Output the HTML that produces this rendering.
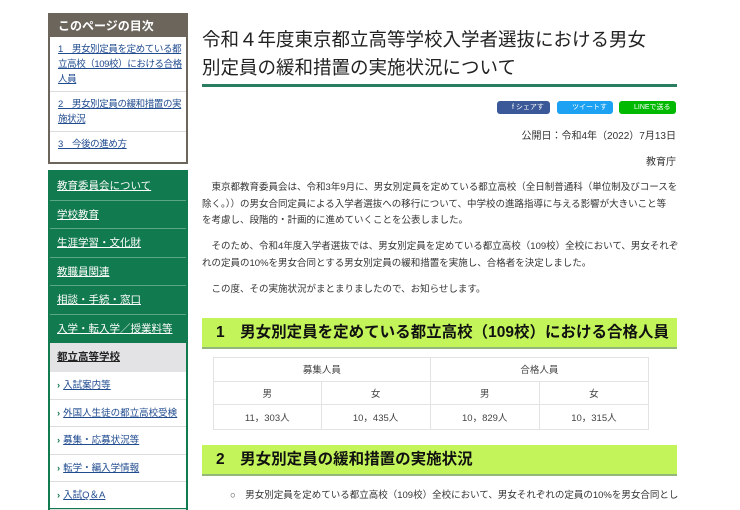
<!DOCTYPE html>
<html><head><meta charset="utf-8"><style>
*{margin:0;padding:0;box-sizing:border-box}
body{width:740px;height:498px;overflow:hidden;background:#fff;font-family:"Liberation Sans","Noto Sans CJK JP",sans-serif;color:#333;position:relative}
.a{position:absolute;white-space:nowrap}
.toc{position:absolute;left:48px;top:13px;width:140px;height:151px;border:2px solid #6b655c;background:#fff}
.toc .h{background:#6b655c;color:#fff;font-weight:bold;font-size:12px;height:22px;line-height:22px;padding-left:8px}
.toc .i{font-size:9.5px;line-height:15px;color:#1f4b8f;text-decoration:underline;padding:5px 4px 4px 8px;border-bottom:1px solid #ddd;white-space:nowrap;letter-spacing:-0.4px}
.nav{position:absolute;left:48px;top:170px;width:140px;height:340px;background:#fff;border:2px solid #127a4f}
.g{background:#127a4f;color:#fff;font-size:10.5px;text-decoration:underline;height:28.5px;line-height:28px;padding-left:7px;border-bottom:1px solid #5aa784;margin:0}
.gh{background:#e3e3e6;height:29px;line-height:29px;font-size:10.5px;font-weight:bold;text-decoration:underline;padding-left:7px;color:#222}
.w{height:27.5px;line-height:27px;font-size:9.5px;color:#1f4b8f;border-bottom:1px solid #ddd;padding-left:7px}
.w span{text-decoration:underline}
.w b{color:#127a4f;margin-right:3px}
p.t{position:absolute;left:202px;width:490px;font-size:9.5px;line-height:16.5px;color:#333;white-space:nowrap}
.hd{position:absolute;left:202px;width:475px;height:31px;background:#c3f55a;border-bottom:2px solid #93b77a;font-size:15.5px;font-weight:bold;line-height:30px;padding-left:14px;color:#111;white-space:nowrap}
table{position:absolute;left:213px;top:357px;width:436px;border-collapse:collapse;font-size:9.5px;color:#444}
td{border:1.5px solid #e3e3e3;text-align:center;height:23.5px}
.btn{position:absolute;top:101px;height:13px;border-radius:3px;color:#fff;font-size:7px;line-height:13px;padding-left:15px}
</style></head><body>
<div class="toc"><div class="h">このページの目次</div>
<div class="i">1　男女別定員を定めている都<br>立高校（109校）における合格<br>人員</div>
<div class="i">2　男女別定員の緩和措置の実<br>施状況</div>
<div class="i" style="border:none">3　今後の進め方</div></div>
<div class="nav">
<div class="g">教育委員会について</div><div class="g">学校教育</div><div class="g">生涯学習・文化財</div><div class="g">教職員関連</div><div class="g">相談・手続・窓口</div><div class="g" style="border:none">入学・転入学／授業料等</div>
<div class="gh">都立高等学校</div>
<div class="w"><b>›</b><span>入試案内等</span></div>
<div class="w"><b>›</b><span>外国人生徒の都立高校受検</span></div>
<div class="w"><b>›</b><span>募集・応募状況等</span></div>
<div class="w"><b>›</b><span>転学・編入学情報</span></div>
<div class="w"><b>›</b><span>入試Q＆A</span></div>
</div>
<div class="a" style="left:202px;top:26px;font-size:18.5px;line-height:28px;color:#222">令和４年度東京都立高等学校入学者選抜における男女<br>別定員の緩和措置の実施状況について</div>
<div class="a" style="left:202px;top:84px;width:475px;height:3px;background:#2a7d60"></div>
<div class="btn" style="left:497px;width:53px;background:#3b5998">f シェアする</div>
<div class="btn" style="left:557px;width:56px;background:#1da1f2">ツイートする</div>
<div class="btn" style="left:619px;width:57px;background:#00b900">LINEで送る</div>
<div class="a" style="right:64px;top:127px;font-size:10px">公開日：令和4年（2022）7月13日</div>
<div class="a" style="right:64px;top:153px;font-size:10px">教育庁</div>
<p class="t" style="top:180px">　東京都教育委員会は、令和3年9月に、男女別定員を定めている都立高校（全日制普通科（単位制及びコースを<br>除く。））の男女合同定員による入学者選抜への移行について、中学校の進路指導に与える影響が大きいこと等<br>を考慮し、段階的・計画的に進めていくことを公表しました。</p>
<p class="t" style="top:239px">　そのため、令和4年度入学者選抜では、男女別定員を定めている都立高校（109校）全校において、男女それぞ<br>れの定員の10%を男女合同とする男女別定員の緩和措置を実施し、合格者を決定しました。</p>
<p class="t" style="top:282px">　この度、その実施状況がまとまりましたので、お知らせします。</p>
<div class="hd" style="top:318px">1　男女別定員を定めている都立高校（109校）における合格人員</div>
<table><tr><td colspan="2">募集人員</td><td colspan="2">合格人員</td></tr>
<tr><td>男</td><td>女</td><td>男</td><td>女</td></tr>
<tr><td style="height:25px">11，303人</td><td>10，435人</td><td>10，829人</td><td>10，315人</td></tr></table>
<div class="hd" style="top:445px">2　男女別定員の緩和措置の実施状況</div>
<div class="a" style="left:230px;top:487px;font-size:9.5px">○　男女別定員を定めている都立高校（109校）全校において、男女それぞれの定員の10%を男女合同とし</div>
</body></html>
